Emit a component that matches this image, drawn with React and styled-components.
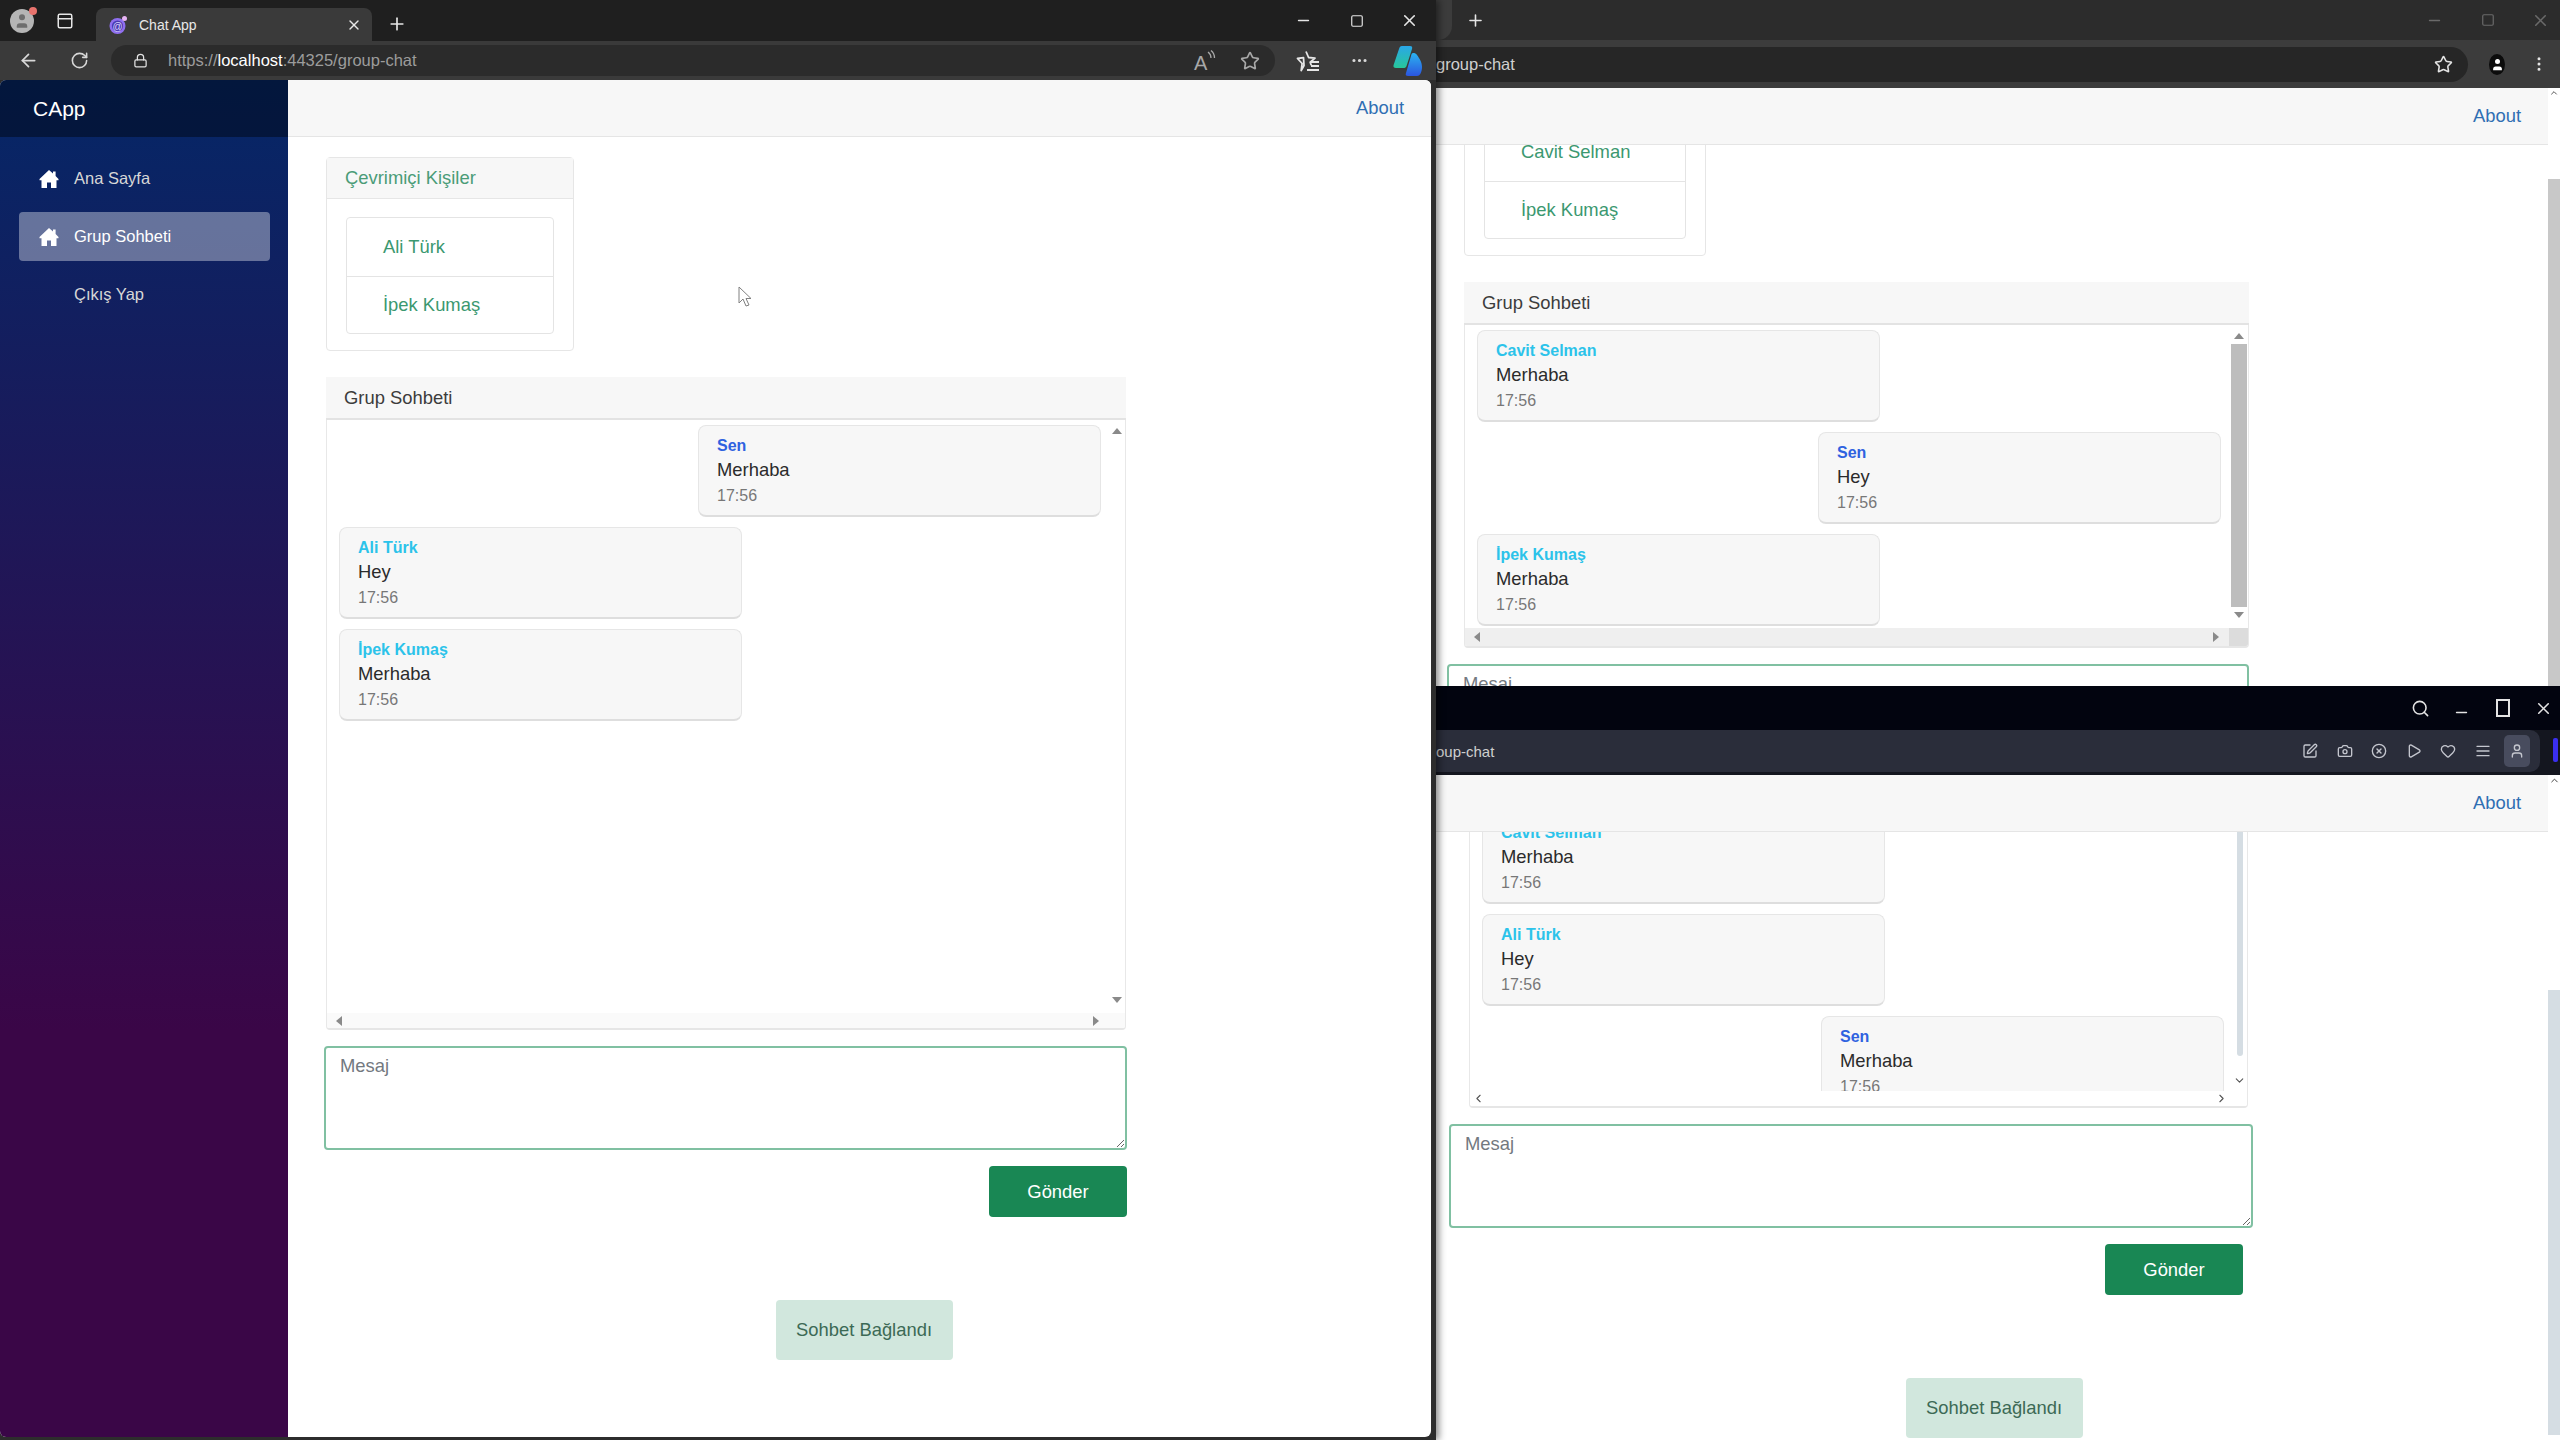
import React from "react";
import styled, { createGlobalStyle } from "styled-components";
import {
  ArrowLeft,
  RotateCw,
  Lock,
  Star,
  MoreHorizontal,
  MoreVertical,
  Plus,
  X,
  Minus,
  Square,
  Search,
  SquarePen,
  Camera,
  CircleX,
  Play,
  Heart,
  AlignJustify,
  User,
  ChevronUp,
  ChevronDown,
  ChevronLeft,
  ChevronRight,
  PanelTop,
} from "lucide-react";

const GlobalStyle = createGlobalStyle`
  html, body {
    margin: 0;
    width: 2560px;
    height: 1440px;
    overflow: hidden;
    background: #2d2d2d;
    font-family: "Liberation Sans", Arial, sans-serif;
  }
  * { box-sizing: border-box; }
`;

const Desktop = styled.div`
  position: relative;
  width: 2560px;
  height: 1440px;
  overflow: hidden;
  background: #2d2d2d;
`;

/* windows sit on a free canvas, so these three are placed by hand */
const Window = styled.section`
  position: absolute;
  left: ${(p) => p.$x}px;
  top: ${(p) => p.$y}px;
  width: ${(p) => p.$w}px;
  height: ${(p) => p.$h}px;
  z-index: ${(p) => p.$z};
  display: flex;
  flex-direction: column;
  overflow: hidden;
  background: ${(p) => p.$bg};
  ${(p) => p.$shadow && "box-shadow: 3px 0 7px rgba(0, 0, 0, 0.45);"}
`;

const TitleBar = styled.div`
  flex: none;
  height: ${(p) => p.$h}px;
  display: flex;
  align-items: center;
  background: ${(p) => p.$bg};
  color: #e6e6e6;
`;

const Avatar = styled.div`
  position: relative;
  width: 24px;
  height: 24px;
  margin: 0 19px 0 10px;
  border-radius: 50%;
  background: #b5b5b5;
  color: #6e6e6e;
  display: flex;
  align-items: center;
  justify-content: center;
  &::after {
    content: "";
    position: absolute;
    top: -2px;
    right: -3px;
    width: 8px;
    height: 8px;
    border-radius: 50%;
    background: #e8736d;
  }
`;

const Tab = styled.div`
  align-self: flex-end;
  width: 276px;
  height: 33px;
  margin-left: 19px;
  padding: 0 10px 0 12px;
  display: flex;
  align-items: center;
  border-radius: 8px 8px 0 0;
  background: #3a3a3a;
  font-size: 14px;
  color: #e8e8e8;
`;

const TabTitle = styled.span`
  flex: 1;
  margin-left: 11px;
`;

const NewTab = styled.div`
  display: flex;
  margin-left: ${(p) => p.$gap}px;
  margin-top: ${(p) => p.$drop || 0}px;
  color: #e6e6e6;
`;

const TabEdge = styled.div`
  width: 16px;
  height: 40px;
  background: #3c3c3c;
  border-radius: 0 0 14px 0;
`;

const Controls = styled.div`
  margin-left: auto;
  margin-right: ${(p) => p.$mr}px;
  display: flex;
  align-items: center;
  color: ${(p) => p.$color};
`;

const Control = styled.div`
  width: ${(p) => p.$w}px;
  display: flex;
  justify-content: center;
  margin-top: ${(p) => p.$drop || 0}px;
`;

const TallSquare = styled.div`
  width: 14px;
  height: 18px;
  border: 2px solid #e4e4e4;
`;

const Toolbar = styled.div`
  flex: none;
  height: ${(p) => p.$h}px;
  display: flex;
  align-items: ${(p) => p.$align || "center"};
  background: ${(p) => p.$bg};
  color: #d8d8d8;
`;

const NavIcon = styled.div`
  flex: none;
  width: ${(p) => p.$w}px;
  margin-left: ${(p) => p.$ml || 0}px;
  display: flex;
  justify-content: center;
  color: ${(p) => p.$color || "inherit"};
`;

const AddressPill = styled.div`
  height: ${(p) => p.$h}px;
  width: ${(p) => p.$w}px;
  flex: none;
  display: flex;
  align-items: center;
  background: ${(p) => p.$bg};
  border-radius: ${(p) => p.$radius};
  margin-left: ${(p) => p.$ml || 0}px;
  color: #c8c8c8;
`;

const LockSlot = styled.div`
  width: 57px;
  padding-left: 22px;
  display: flex;
  color: #e2e2e2;
`;

const Url = styled.span`
  font-size: ${(p) => p.$size}px;
  color: ${(p) => p.$color || "#9c9c9c"};
  b {
    color: #fff;
    font-weight: 400;
  }
`;

const PillIcons = styled.div`
  margin-left: auto;
  display: flex;
  align-items: center;
  color: ${(p) => p.$color};
  padding-right: ${(p) => p.$pr}px;
  gap: ${(p) => p.$gap}px;
`;

const ActiveIcon = styled.div`
  width: 26px;
  height: 32px;
  border-radius: 5px;
  background: #484c5e;
  display: flex;
  align-items: center;
  justify-content: center;
  margin: 0 -5px;
`;

const PurpleMark = styled.div`
  width: 5px;
  height: 24px;
  margin: 8px 0 0 13px;
  border-radius: 2px;
  background: #3a2ff0;
`;

const ProfileDot = styled.div`
  width: 21px;
  height: 21px;
  margin-left: 21px;
  border-radius: 50%;
  background: #0c0c0c;
  color: #fff;
  display: flex;
  align-items: center;
  justify-content: center;
`;

const AppFrame = styled.div`
  flex: 1;
  min-height: 0;
  display: flex;
  background: #fff;
  border-radius: ${(p) => p.$radius || "0"};
  margin-right: ${(p) => p.$mr || 0}px;
  margin-bottom: ${(p) => p.$mb || 0}px;
  overflow: hidden;
`;

const Sidebar = styled.aside`
  flex: none;
  width: 288px;
  background: linear-gradient(180deg, #052767 0%, #3a0647 70%);
`;

const Brand = styled.div`
  height: 57px;
  padding-left: 33px;
  display: flex;
  align-items: center;
  background: rgba(0, 0, 0, 0.4);
  color: #fff;
  font-size: 21px;
`;

const SideNav = styled.nav`
  padding: 17px 18px 0 19px;
  display: flex;
  flex-direction: column;
  gap: 9px;
`;

const SideLink = styled.a`
  height: 49px;
  padding-left: 20px;
  display: flex;
  align-items: center;
  gap: 15px;
  border-radius: 4px;
  font-size: 16.5px;
  color: ${(p) => (p.$active ? "#fff" : "#d7d7d7")};
  background: ${(p) => (p.$active ? "rgba(255, 255, 255, 0.37)" : "transparent")};
`;

const IconSlot = styled.span`
  width: 20px;
  height: 20px;
  flex: none;
`;

const Main = styled.main`
  flex: 1;
  min-width: 0;
  display: flex;
  flex-direction: column;
`;

const TopNav = styled.header`
  flex: none;
  height: 57px;
  padding-right: 27px;
  display: flex;
  align-items: center;
  justify-content: flex-end;
  background: #f7f7f7;
  border-bottom: 1px solid #e5e5e5;
  font-size: 18.4px;
  color: #2f6fb3;
`;

const Body = styled.div`
  flex: 1;
  min-height: 0;
  overflow: hidden;
  display: flex;
  flex-direction: column;
  align-items: flex-start;
  padding: ${(p) => p.$top}px 29px 0 ${(p) => p.$left}px;
`;

const Card = styled.div`
  flex: none;
  width: ${(p) => p.$w}px;
  margin-top: ${(p) => p.$mt || 0}px;
  border: 1px solid #e6e6e6;
  border-radius: 4px;
`;

const CardHead = styled.div`
  height: 41px;
  padding-left: 18px;
  display: flex;
  align-items: center;
  background: #f7f7f7;
  border-bottom: 1px solid #e6e6e6;
  font-size: 18.4px;
  color: #4a9c77;
`;

const PersonList = styled.ul`
  list-style: none;
  margin: 18px 19px 16px 19px;
  padding: 0;
  border: 1px solid #e4e4e4;
  border-radius: 4px;
`;

const Person = styled.li`
  height: 57.5px;
  padding-left: 36px;
  display: flex;
  align-items: center;
  font-size: 18.4px;
  color: #3b9870;
  & + & {
    border-top: 1px solid #e4e4e4;
  }
`;

const ChatPanel = styled.div`
  flex: none;
  width: ${(p) => p.$w}px;
  margin-top: ${(p) => p.$mt}px;
`;

const ChatHead = styled.div`
  height: 43px;
  padding-left: 18px;
  display: flex;
  align-items: center;
  background: #f7f7f7;
  border-bottom: 2px solid #e3e3e3;
  font-size: 18.4px;
  color: #3c3c3c;
`;

const ChatBox = styled.div`
  height: ${(p) => p.$h}px;
  display: grid;
  grid-template-columns: 1fr ${(p) => p.$bar}px;
  grid-template-rows: 1fr ${(p) => p.$hbar}px;
  border: 1px solid #e8e8e8;
  border-top: 0;
  border-bottom: 2px solid #e6e6e6;
  border-radius: 0 0 4px 4px;
  overflow: hidden;
`;

const Messages = styled.div`
  overflow: hidden;
  padding: 5px 8px 0 12px;
  display: flex;
  flex-direction: column;
  gap: 10px;
`;

const Bubble = styled.div`
  flex: none;
  width: 403px;
  height: 92px;
  align-self: ${(p) => (p.$mine ? "flex-end" : "flex-start")};
  padding: 10px 18px 0;
  background: #f7f7f7;
  border: 1px solid #e6e6e6;
  border-bottom: 2px solid #dedede;
  border-radius: 8px;
`;

const Sender = styled.div`
  height: 20px;
  line-height: 20px;
  font-size: 16px;
  font-weight: 700;
  color: ${(p) => (p.$mine ? "#2f62e0" : "#2cc3ea")};
`;

const MessageText = styled.div`
  height: 24px;
  margin-top: 2px;
  line-height: 24px;
  font-size: 18.4px;
  color: #2b2b2b;
`;

const MessageTime = styled.div`
  height: 24px;
  margin-top: 2px;
  line-height: 24px;
  font-size: 16px;
  color: #777;
`;

const VTrack = styled.div`
  display: flex;
  flex-direction: column;
  align-items: center;
  justify-content: space-between;
  padding: 8px 0 ${(p) => (p.$kind === "thin" ? 4 : 10)}px;
`;

const Thumb = styled.div`
  flex: 1;
  width: ${(p) => (p.$kind === "thin" ? 6 : 16)}px;
  margin: ${(p) => (p.$kind === "thin" ? "-8px 0 18px" : "5px 0 5px")};
  border-radius: ${(p) => (p.$kind === "thin" ? "3px" : "0")};
  background: ${(p) =>
    p.$kind === "thin" ? "#d5dde3" : p.$kind === "gray" ? "#bdbdbd" : "transparent"};
`;

const HTrack = styled.div`
  display: flex;
  align-items: center;
  justify-content: space-between;
  padding: ${(p) => (p.$kind === "thin" ? "0 4px 0 2px" : "0 10px 0 9px")};
  background: ${(p) =>
    p.$kind === "gray" ? "#efefef" : p.$kind === "thin" ? "#fff" : "#fafafa"};
`;

const Corner = styled.div`
  background: ${(p) =>
    p.$kind === "gray" ? "#dcdcdc" : p.$kind === "thin" ? "#fff" : "#fafafa"};
`;

const Tri = styled.span`
  flex: none;
  width: 0;
  height: 0;
  border-style: solid;
  border-color: transparent;
  ${(p) => p.$dir === "up" && "border-width: 0 5px 6px; border-bottom-color: #8a8a8a;"}
  ${(p) => p.$dir === "down" && "border-width: 6px 5px 0; border-top-color: #8a8a8a;"}
  ${(p) => p.$dir === "left" && "border-width: 5px 6px 5px 0; border-right-color: #8a8a8a;"}
  ${(p) => p.$dir === "right" && "border-width: 5px 0 5px 6px; border-left-color: #8a8a8a;"}
`;

const Composer = styled.div`
  flex: none;
  width: ${(p) => p.$w}px;
  margin-left: ${(p) => p.$shift}px;
  margin-top: ${(p) => p.$mt}px;
  display: flex;
  flex-direction: column;
`;

const MessageInput = styled.textarea`
  display: block;
  width: 100%;
  height: 104px;
  padding: 5px 14px;
  border: 2px solid #80c0a2;
  border-radius: 4px;
  outline: 0;
  background: #fff;
  font: 18.4px/26px "Liberation Sans", Arial, sans-serif;
  &::placeholder {
    color: #73797f;
    opacity: 1;
  }
`;

const SendButton = styled.button`
  align-self: flex-end;
  width: 138px;
  height: 51px;
  margin: 16px ${(p) => p.$mr || 0}px 0 0;
  border: 0;
  border-radius: 4px;
  background: #198754;
  color: #fff;
  font: 18.4px "Liberation Sans", Arial, sans-serif;
`;

const Toast = styled.div`
  flex: none;
  align-self: center;
  width: 177px;
  height: 60px;
  margin-top: 83px;
  display: flex;
  align-items: center;
  justify-content: center;
  background: #d1e7dd;
  border-radius: 4px;
  font-size: 18.4px;
  color: #3c6a55;
`;

const PageBar = styled.div`
  flex: none;
  width: 12px;
  display: flex;
  flex-direction: column;
  align-items: center;
  background: #fff;
  color: #333;
`;

const PageThumb = styled.div`
  width: 100%;
  height: ${(p) => p.$h}px;
  margin-top: ${(p) => p.$top}px;
  background: ${(p) => p.$color};
`;

const Cursor = styled.svg`
  position: absolute;
  left: 738px;
  top: 286px;
  z-index: 10;
`;

const HomeIcon = () => (
  <svg width="20" height="20" viewBox="0 0 20 20" fill="#fff">
    <path d="M10 1l4 3.600V2.500h2.600v4.400L19.500 10v1.200h-2V19H12v-5.500H8V19H2.500v-7.800h-2V10z" />
  </svg>
);

const Favicon = () => (
  <svg width="20" height="20" viewBox="0 0 20 20">
    <circle cx="9.500" cy="11" r="8" fill="#8f6ff0" />
    <circle cx="9.500" cy="11" r="5.600" fill="#4b3bb0" />
    <text x="9.500" y="14.500" textAnchor="middle" fontSize="10" fill="#d9d2ff" fontFamily="Liberation Sans">
      @
    </text>
    <circle cx="16.500" cy="3.500" r="2.500" fill="#e7b4f5" />
  </svg>
);

const ReadAloudIcon = () => (
  <svg width="24" height="24" viewBox="0 0 24 24" fill="none" stroke="#a8a8a8">
    <text x="1" y="21" fontSize="20" fill="#a8a8a8" stroke="none" fontFamily="Liberation Sans">
      A
    </text>
    <path d="M15 3c2 1.500 3 3.500 3 6" strokeWidth="1.300" />
    <path d="M18 1.500c2.500 2 3.500 4.500 3.500 7.500" strokeWidth="1.300" />
  </svg>
);

const FavoritesIcon = () => (
  <svg width="24" height="24" viewBox="0 0 24 24" fill="none" stroke="#e6e6e6" strokeWidth="1.800">
    <path d="M10 2.500l2.600 6 6.400.6-4.800 4.200 1 3M8 16.500l-2.800 5 .9-7L1.500 9.500l6-.8z" strokeLinejoin="round" />
    <path d="M15 13h8M15 17h8M11 21h12" />
  </svg>
);

const CopilotIcon = () => (
  <svg width="30" height="32" viewBox="0 0 30 32">
    <defs>
      <linearGradient id="cpA" x1="0" y1="0" x2="0" y2="1">
        <stop offset="0" stopColor="#2aa7e8" />
        <stop offset="1" stopColor="#27c79a" />
      </linearGradient>
      <linearGradient id="cpB" x1="0" y1="0" x2="0" y2="1">
        <stop offset="0" stopColor="#2bb3f0" />
        <stop offset="1" stopColor="#2b55e0" />
      </linearGradient>
    </defs>
    <path d="M9 1h8c2 0 2.600 1 2 3l-5.500 17c-.5 1.600-1.400 2-3 2H3c-2 0-3-1-2.400-3L6 4c.6-2 1.200-3 3-3z" fill="url(#cpA)" />
    <path d="M20 8c2 0 3 .5 4 2 2.500 3.600 5 7 5 12 0 4-1.500 9-5 9h-9c-2 0-2.800-1-2-3l5-17c.4-2 1-3 2-3z" fill="url(#cpB)" />
  </svg>
);

const ScrollArrow = ({ dir, kind }) => {
  if (kind !== "thin") return <Tri $dir={dir} />;
  const Icon = { up: ChevronUp, down: ChevronDown, left: ChevronLeft, right: ChevronRight }[dir];
  return <Icon size={13} color="#555" strokeWidth={2} />;
};

const Chat = ({ width, top, boxHeight, bar, hbar, kind, items }) => (
  <ChatPanel $w={width} $mt={top}>
    <ChatHead>Grup Sohbeti</ChatHead>
    <ChatBox $h={boxHeight} $bar={bar} $hbar={hbar}>
      <Messages>
        {items.map((m, i) => (
          <Bubble key={i} $mine={m.mine}>
            <Sender $mine={m.mine}>{m.from}</Sender>
            <MessageText>{m.text}</MessageText>
            <MessageTime>17:56</MessageTime>
          </Bubble>
        ))}
      </Messages>
      <VTrack $kind={kind}>
        {kind !== "thin" && <ScrollArrow dir="up" kind={kind} />}
        <Thumb $kind={kind} />
        <ScrollArrow dir="down" kind={kind} />
      </VTrack>
      <HTrack $kind={kind}>
        <ScrollArrow dir="left" kind={kind} />
        <ScrollArrow dir="right" kind={kind} />
      </HTrack>
      <Corner $kind={kind} />
    </ChatBox>
  </ChatPanel>
);

const WinControls = ({ color, width, mr, size = 17 }) => (
  <Controls $color={color} $mr={mr}>
    <Control $w={width}><Minus size={size} /></Control>
    <Control $w={width}><Square size={size - 3} /></Control>
    <Control $w={width}><X size={size + 2} /></Control>
  </Controls>
);

const leftMessages = [
  { from: "Sen", text: "Merhaba", mine: true },
  { from: "Ali Türk", text: "Hey" },
  { from: "İpek Kumaş", text: "Merhaba" },
];

const topMessages = [
  { from: "Cavit Selman", text: "Merhaba" },
  { from: "Sen", text: "Hey", mine: true },
  { from: "İpek Kumaş", text: "Merhaba" },
];

const bottomMessages = [
  { from: "Cavit Selman", text: "Merhaba" },
  { from: "Ali Türk", text: "Hey" },
  { from: "Sen", text: "Merhaba", mine: true },
];

const App = () => (
  <Desktop>
    <GlobalStyle />

    <Window $x={0} $y={0} $w={1436} $h={1440} $z={3} $bg="#2d2d2d" $shadow>
      <TitleBar $h={41} $bg="#1f1f1f">
        <Avatar><User size={18} fill="#6e6e6e" strokeWidth={0} /></Avatar>
        <NavIcon $w={24}><PanelTop size={18} /></NavIcon>
        <Tab>
          <Favicon />
          <TabTitle>Chat App</TabTitle>
          <X size={16} />
        </Tab>
        <NewTab $gap={15} $drop={7}><Plus size={20} /></NewTab>
        <WinControls color="#e6e6e6" width={53} mr={0} />
      </TitleBar>
      <Toolbar $h={39} $bg="#3a3a3a">
        <NavIcon $w={56}><ArrowLeft size={21} /></NavIcon>
        <NavIcon $w={46}><RotateCw size={19} /></NavIcon>
        <AddressPill $h={31} $w={1164} $ml={9} $bg="#2b2b2b" $radius="16px">
          <LockSlot><Lock size={15} /></LockSlot>
          <Url $size={16.5}>
            https://<b>localhost</b>:44325/group-chat
          </Url>
          <PillIcons $color="#a8a8a8" $pr={15} $gap={23}>
            <ReadAloudIcon />
            <Star size={20} />
          </PillIcons>
        </AddressPill>
        <NavIcon $w={66}><FavoritesIcon /></NavIcon>
        <NavIcon $w={36}><MoreHorizontal size={19} /></NavIcon>
        <NavIcon $w={62}><CopilotIcon /></NavIcon>
      </Toolbar>
      <AppFrame $radius="6px" $mr={5} $mb={3}>
        <Sidebar>
          <Brand>CApp</Brand>
          <SideNav>
            <SideLink><HomeIcon />Ana Sayfa</SideLink>
            <SideLink $active><HomeIcon />Grup Sohbeti</SideLink>
            <SideLink><IconSlot />Çıkış Yap</SideLink>
          </SideNav>
        </Sidebar>
        <Main>
          <TopNav>About</TopNav>
          <Body $top={20} $left={38}>
            <Card $w={248}>
              <CardHead>Çevrimiçi Kişiler</CardHead>
              <PersonList>
                <Person>Ali Türk</Person>
                <Person>İpek Kumaş</Person>
              </PersonList>
            </Card>
            <Chat width={800} top={26} boxHeight={610} bar={16} hbar={15} kind="light" items={leftMessages} />
            <Composer $w={803} $shift={-2} $mt={16}>
              <MessageInput placeholder="Mesaj" readOnly />
              <SendButton>Gönder</SendButton>
            </Composer>
            <Toast>Sohbet Bağlandı</Toast>
          </Body>
        </Main>
      </AppFrame>
    </Window>

    <Window $x={1436} $y={0} $w={1124} $h={686} $z={1} $bg="#fff">
      <TitleBar $h={40} $bg="#2c2c2c">
        <TabEdge />
        <NewTab $gap={14}><Plus size={19} /></NewTab>
        <WinControls color="#6a6a6a" width={53} mr={-7} />
      </TitleBar>
      <Toolbar $h={48} $bg="#3c3c3c">
        <AddressPill $h={35} $w={1032} $bg="#262626" $radius="0 18px 18px 0">
          <Url $size={16.5} $color="#d0d0d0">group-chat</Url>
          <PillIcons $color="#e4e4e4" $pr={15} $gap={0}>
            <Star size={19} />
          </PillIcons>
        </AddressPill>
        <ProfileDot><User size={15} fill="#fff" strokeWidth={0} /></ProfileDot>
        <NavIcon $w={43} $ml={12} $color="#e4e4e4"><MoreVertical size={18} /></NavIcon>
      </Toolbar>
      <AppFrame>
        <Main>
          <TopNav>About</TopNav>
          <Body $top={0} $left={28}>
            <Card $w={242} $mt={-83}>
              <CardHead>Çevrimiçi Kişiler</CardHead>
              <PersonList>
                <Person>Cavit Selman</Person>
                <Person>İpek Kumaş</Person>
              </PersonList>
            </Card>
            <Chat width={785} top={26} boxHeight={323} bar={19} hbar={18} kind="gray" items={topMessages} />
            <Composer $w={802} $shift={-17} $mt={16}>
              <MessageInput placeholder="Mesaj" readOnly />
            </Composer>
          </Body>
        </Main>
        <PageBar>
          <ChevronUp size={10} />
          <PageThumb $top={81} $h={520} $color="#c8c8c8" />
        </PageBar>
      </AppFrame>
    </Window>

    <Window $x={1436} $y={686} $w={1124} $h={754} $z={2} $bg="#fff">
      <TitleBar $h={44} $bg="#02040f">
        <Controls $color="#e4e4e4" $mr={-4}>
          <Control $w={41}><Search size={19} /></Control>
          <Control $w={41} $drop={9}><Minus size={17} /></Control>
          <Control $w={41}><TallSquare /></Control>
          <Control $w={41}><X size={19} /></Control>
        </Controls>
      </TitleBar>
      <Toolbar $h={45} $bg="#14161f" $align="flex-start">
        <AddressPill $h={42} $w={1104} $bg="#2a2d3a" $radius="0 10px 10px 0">
          <Url $size={15} $color="#cfcfcf">oup-chat</Url>
          <PillIcons $color="#c4c6ce" $pr={15} $gap={18.5}>
            <SquarePen size={16} />
            <Camera size={16} />
            <CircleX size={16} />
            <Play size={16} />
            <Heart size={16} />
            <AlignJustify size={16} />
            <ActiveIcon><User size={16} /></ActiveIcon>
          </PillIcons>
        </AddressPill>
        <PurpleMark />
      </Toolbar>
      <AppFrame>
        <Main>
          <TopNav>About</TopNav>
          <Body $top={0} $left={33}>
            <Chat width={779} top={-68} boxHeight={301} bar={15} hbar={15} kind="thin" items={bottomMessages} />
            <Composer $w={804} $shift={-20} $mt={16}>
              <MessageInput placeholder="Mesaj" readOnly />
              <SendButton $mr={10}>Gönder</SendButton>
            </Composer>
            <Toast>Sohbet Bağlandı</Toast>
          </Body>
        </Main>
        <PageBar>
          <ChevronUp size={11} />
          <PageThumb $top={204} $h={445} $color="#d5dde3" />
        </PageBar>
      </AppFrame>
    </Window>

    <Cursor width="16" height="22" viewBox="0 0 16 22">
      <path d="M1 1v16l4-4 3 7 3-1-3-6.500h5z" fill="#fff" stroke="#808080" strokeWidth="1" />
    </Cursor>
  </Desktop>
);

export default App;
